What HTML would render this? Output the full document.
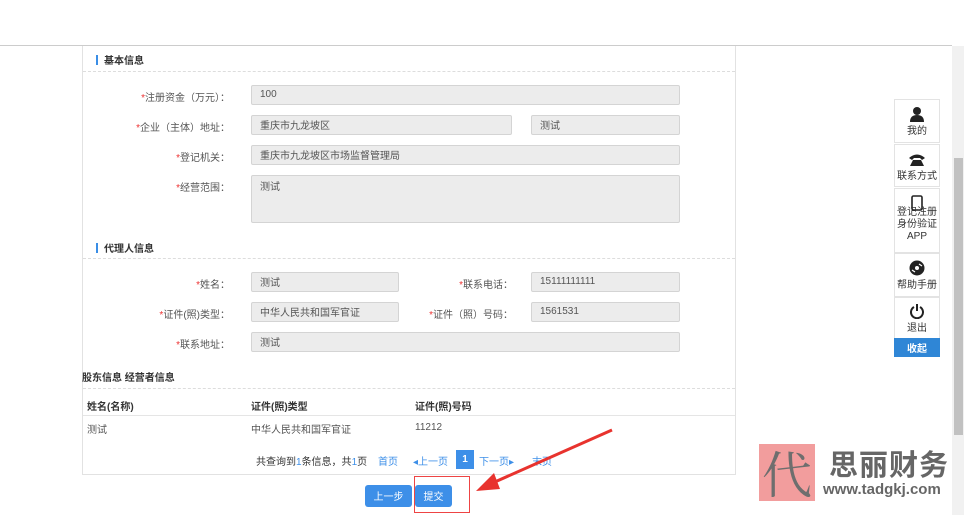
<!DOCTYPE html>
<html><head><meta charset="utf-8"><style>
*{margin:0;padding:0;box-sizing:border-box}
body{width:964px;height:515px;overflow:hidden;background:#fff;position:relative;font-family:"Liberation Sans","Noto Sans CJK SC",sans-serif;font-size:10px;color:#333}
.a{position:absolute}
.topline{left:0;top:45px;width:952px;height:1px;background:#ccc}
.panel{left:82px;top:46px;width:654px;height:429px;border-left:1px solid #e2e2e2;border-right:1px solid #e2e2e2;border-bottom:1px solid #e2e2e2}
.sec{font-weight:bold;font-size:10px;color:#333}
.sec:before{content:"";display:inline-block;width:2px;height:10px;background:#3a8ee6;margin-right:6px;vertical-align:-1px}
.dash{height:0;border-top:1px dashed #ddd}
.lbl{text-align:right;color:#555;font-size:10px}
.lbl b{color:#e33;font-weight:normal}
.in{background:#ececec;border:1px solid #d4d4d4;border-radius:2px;height:20px;display:flex;align-items:center;padding:0 0 2px 8px;color:#555;font-size:10px}
.side{left:894px;width:46px;border:1px solid #e3e3e3;background:#fff;text-align:center;font-size:10px;color:#333;line-height:12px}
.btn{background:#3d8fe8;color:#fff;border-radius:3px;display:flex;align-items:center;justify-content:center;font-size:10px;height:22px;padding-bottom:2px}
</style></head><body>
<div class="a topline"></div>
<div class="a panel"></div>

<div class="a sec" style="left:96px;top:52px">基本信息</div>
<div class="a dash" style="left:83px;top:71px;width:652px"></div>

<div class="a lbl" style="left:100px;top:89px;width:130px"><b>*</b>注册资金（万元）：</div>
<div class="a in" style="left:251px;top:85px;width:429px">100</div>
<div class="a lbl" style="left:100px;top:119px;width:130px"><b>*</b>企业（主体）地址：</div>
<div class="a in" style="left:251px;top:115px;width:261px">重庆市九龙坡区</div>
<div class="a in" style="left:531px;top:115px;width:149px">测试</div>
<div class="a lbl" style="left:100px;top:149px;width:130px"><b>*</b>登记机关：</div>
<div class="a in" style="left:251px;top:145px;width:429px">重庆市九龙坡区市场监督管理局</div>
<div class="a lbl" style="left:100px;top:179px;width:130px"><b>*</b>经营范围：</div>
<div class="a in" style="left:251px;top:175px;width:429px;height:48px;align-items:flex-start;padding-top:2px">测试</div>

<div class="a sec" style="left:96px;top:240px">代理人信息</div>
<div class="a dash" style="left:83px;top:258px;width:652px"></div>
<div class="a lbl" style="left:100px;top:276px;width:130px"><b>*</b>姓名：</div>
<div class="a in" style="left:251px;top:272px;width:148px">测试</div>
<div class="a lbl" style="left:380px;top:276px;width:133px"><b>*</b>联系电话：</div>
<div class="a in" style="left:531px;top:272px;width:149px">15111111111</div>
<div class="a lbl" style="left:100px;top:306px;width:130px"><b>*</b>证件(照)类型：</div>
<div class="a in" style="left:251px;top:302px;width:148px">中华人民共和国军官证</div>
<div class="a lbl" style="left:380px;top:306px;width:133px"><b>*</b>证件（照）号码：</div>
<div class="a in" style="left:531px;top:302px;width:149px">1561531</div>
<div class="a lbl" style="left:100px;top:336px;width:130px"><b>*</b>联系地址：</div>
<div class="a in" style="left:251px;top:332px;width:429px">测试</div>

<div class="a" style="left:82px;top:369px;font-weight:bold">股东信息 经营者信息</div>
<div class="a dash" style="left:83px;top:388px;width:652px"></div>
<div class="a" style="left:87px;top:398px;font-weight:bold">姓名(名称)</div>
<div class="a" style="left:251px;top:398px;font-weight:bold">证件(照)类型</div>
<div class="a" style="left:415px;top:398px;font-weight:bold">证件(照)号码</div>
<div class="a" style="left:83px;top:415px;width:652px;height:1px;background:#e5e5e5"></div>
<div class="a" style="left:87px;top:421px;color:#555">测试</div>
<div class="a" style="left:251px;top:421px;color:#555">中华人民共和国军官证</div>
<div class="a" style="left:415px;top:422px;color:#555">11212</div>

<div class="a" style="left:256px;top:453px;color:#333">共查询到<span style="color:#3d8fe8">1</span>条信息，共<span style="color:#3d8fe8">1</span>页</div>
<div class="a" style="left:378px;top:453px;color:#3d8fe8">首页</div>
<div class="a" style="left:413px;top:453px;color:#3d8fe8">◂上一页</div>
<div class="a" style="left:456px;top:450px;width:18px;height:19px;background:#3d8fe8;color:#fff;display:flex;align-items:center;justify-content:center;font-weight:bold">1</div>
<div class="a" style="left:479px;top:453px;color:#3d8fe8">下一页▸</div>
<div class="a" style="left:532px;top:453px;color:#3d8fe8">末页</div>

<div class="a btn" style="left:365px;top:485px;width:47px">上一步</div>
<div class="a btn" style="left:415px;top:485px;width:37px">提交</div>
<div class="a" style="left:414px;top:476px;width:56px;height:37px;border:1px solid #e44"></div>
<svg class="a" style="left:470px;top:425px" width="150" height="75"><line x1="142" y1="5" x2="18" y2="60" stroke="#e8332e" stroke-width="3"/><polygon points="6,66 24,48 30,64" fill="#e8332e"/></svg>

<div class="a side" style="top:99px;height:44px;padding-top:6px">
<svg width="16" height="16" viewBox="0 0 16 16"><circle cx="8" cy="5" r="4" fill="#222"/><path d="M1 16 Q1 9 8 9 Q15 9 15 16Z" fill="#222"/></svg><br>我的</div>
<div class="a side" style="top:144px;height:43px;padding-top:8px">
<svg width="18" height="14" viewBox="0 0 18 14"><path d="M1 5 Q9 -2 17 5 L14 7 L12 5 L6 5 L4 7Z" fill="#222"/><path d="M5 7 L13 7 L16 13 L2 13Z" fill="#222"/></svg><br>联系方式</div>
<div class="a side" style="top:188px;height:65px;padding-top:6px">
<svg width="12" height="16" viewBox="0 0 12 16" style="margin-bottom:-8px"><rect x="1" y="1" width="10" height="14" rx="1.5" fill="none" stroke="#222" stroke-width="1.6"/></svg><br>登记注册<br>身份验证<br>APP</div>
<div class="a side" style="top:253px;height:44px;padding-top:6px">
<svg width="16" height="16" viewBox="0 0 16 16"><circle cx="8" cy="8" r="7.5" fill="#222"/><circle cx="8" cy="8" r="2" fill="#fff"/><path d="M10 4 L13 6 M3 10 L6 12" stroke="#fff" stroke-width="1.2"/></svg><br>帮助手册</div>
<div class="a side" style="top:297px;height:42px;padding-top:5px">
<svg width="16" height="16" viewBox="0 0 16 16"><path d="M5 4 A6 6 0 1 0 11 4" fill="none" stroke="#222" stroke-width="2"/><line x1="8" y1="1" x2="8" y2="8" stroke="#222" stroke-width="2"/></svg><br>退出</div>
<div class="a" style="left:894px;top:338px;width:46px;height:19px;background:#2f86d6;color:#fff;display:flex;align-items:center;justify-content:center;font-weight:bold">收起</div>

<div class="a" style="left:952px;top:46px;width:12px;height:469px;background:#f1f1f1"></div>
<div class="a" style="left:954px;top:158px;width:9px;height:277px;background:#c1c1c1"></div>

<div class="a" style="left:759px;top:444px;width:56px;height:57px;background:#f08c8c;opacity:.85;color:#555;font-size:50px;line-height:56px;text-align:center;font-family:'Noto Serif CJK SC',serif">代</div>
<div class="a" style="left:829px;top:442px;font-size:29px;color:#666;font-weight:bold;letter-spacing:1px">思丽财务</div>
<div class="a" style="left:823px;top:481px;font-size:15px;color:#666;font-weight:bold">www.tadgkj.com</div>
</body></html>
